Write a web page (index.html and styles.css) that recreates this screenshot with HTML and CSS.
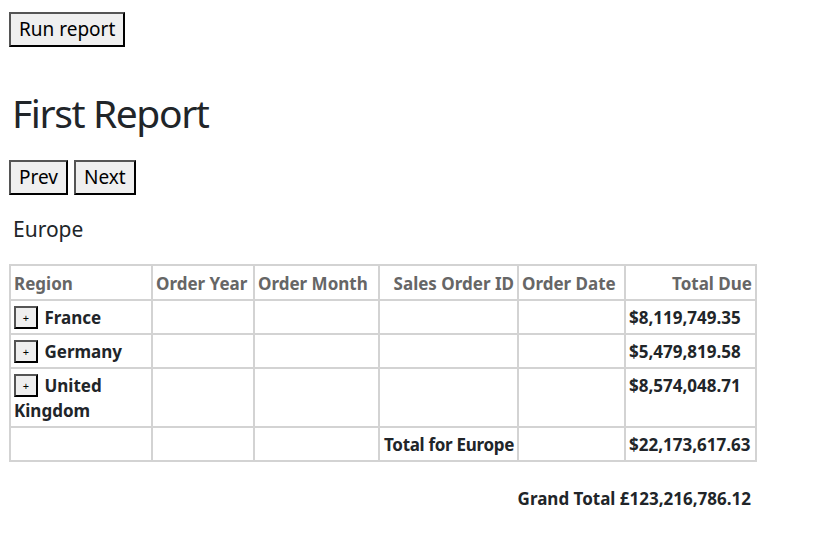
FILE: index.html
```html
<!DOCTYPE html>
<html>
<head>
<meta charset="utf-8">
<link rel="stylesheet" href="styles.css">
</head>
<body>
<div class="page">
  <div class="toolbar"><button class="btn">Run report</button></div>
  <h1 class="title">First Report</h1>
  <div class="pager"><button class="btn">Prev</button><button class="btn">Next</button></div>
  <h2 class="group">Europe</h2>
  <table class="report">
    <colgroup>
      <col class="c1"><col class="c2"><col class="c3"><col class="c4"><col class="c5"><col class="c6">
    </colgroup>
    <thead>
      <tr>
        <th>Region</th>
        <th>Order Year</th>
        <th>Order Month</th>
        <th class="num">Sales Order ID</th>
        <th>Order Date</th>
        <th class="num">Total Due</th>
      </tr>
    </thead>
    <tbody>
      <tr>
        <td><button class="toggle">+</button> France</td>
        <td></td><td></td><td></td><td></td>
        <td>$8,119,749.35</td>
      </tr>
      <tr>
        <td><button class="toggle">+</button> Germany</td>
        <td></td><td></td><td></td><td></td>
        <td>$5,479,819.58</td>
      </tr>
      <tr>
        <td><button class="toggle">+</button> United Kingdom</td>
        <td></td><td></td><td></td><td></td>
        <td>$8,574,048.71</td>
      </tr>
      <tr>
        <td></td><td></td><td></td>
        <td class="subtotal">Total for Europe</td>
        <td></td>
        <td>$22,173,617.63</td>
      </tr>
    </tbody>
  </table>
  <div class="grand">Grand Total £123,216,786.12</div>
</div>
</body>
</html>
```
FILE: styles.css
```css
html, body {
  margin: 0;
  padding: 0;
  background: #fff;
}
body {
  font-family: "Noto Sans", "Open Sans", sans-serif;
  color: #212529;
}
.page {
  padding: 12px 0 0 9px;
}
.btn {
  font-family: inherit;
  font-size: 19px;
  line-height: 27px;
  color: #000;
  background: #efefef;
  border: 2px solid;
  border-color: #555 #000 #000 #555;
  padding: 2px 8px 2px 8px;
  height: 35px;
  margin: 0;
  border-radius: 0;
}
.toolbar {
  display: flex;
}
.title {
  font-size: 39px;
  font-weight: 400;
  line-height: 50px;
  margin: 41px 0 0 3px;
  letter-spacing: -1.4px;
}
.pager {
  display: flex;
  gap: 6px;
  margin-top: 22px;
}
.group {
  font-size: 21px;
  font-weight: 400;
  line-height: 28px;
  margin: 20px 0 0 4px;
}
.report {
  border-collapse: collapse;
  table-layout: fixed;
  width: 746px;
  margin-top: 21px;
  font-size: 17px;
  font-weight: 700;
}
.c1 { width: 142px; }
.c2 { width: 102px; }
.c3 { width: 125px; }
.c4 { width: 139px; }
.c5 { width: 107px; }
.c6 { width: 131px; }
.report th, .report td {
  border: 2px solid #d3d3d3;
  padding: 4px 3px 3px 3px;
  line-height: 25px;
  vertical-align: top;
  text-align: left;
}
.report th {
  color: #666;
  padding-top: 5px;
  padding-bottom: 3px;
}
.report th.num {
  text-align: right;
}
.report td {
  color: #212529;
}
.report td.subtotal {
  white-space: nowrap;
  letter-spacing: -0.3px;
  padding-left: 4px;
}
.toggle {
  font-family: inherit;
  font-size: 11px;
  width: 24px;
  height: 23px;
  padding: 0;
  margin: 1px 2px 0 0;
  background: #efefef;
  border: 2px solid;
  border-color: #555 #000 #000 #555;
  color: #000;
  vertical-align: top;
  line-height: 19px;
}
.grand {
  width: 742px;
  text-align: right;
  margin-top: 24px;
  font-size: 17px;
  font-weight: 700;
  line-height: 25px;
}
```
